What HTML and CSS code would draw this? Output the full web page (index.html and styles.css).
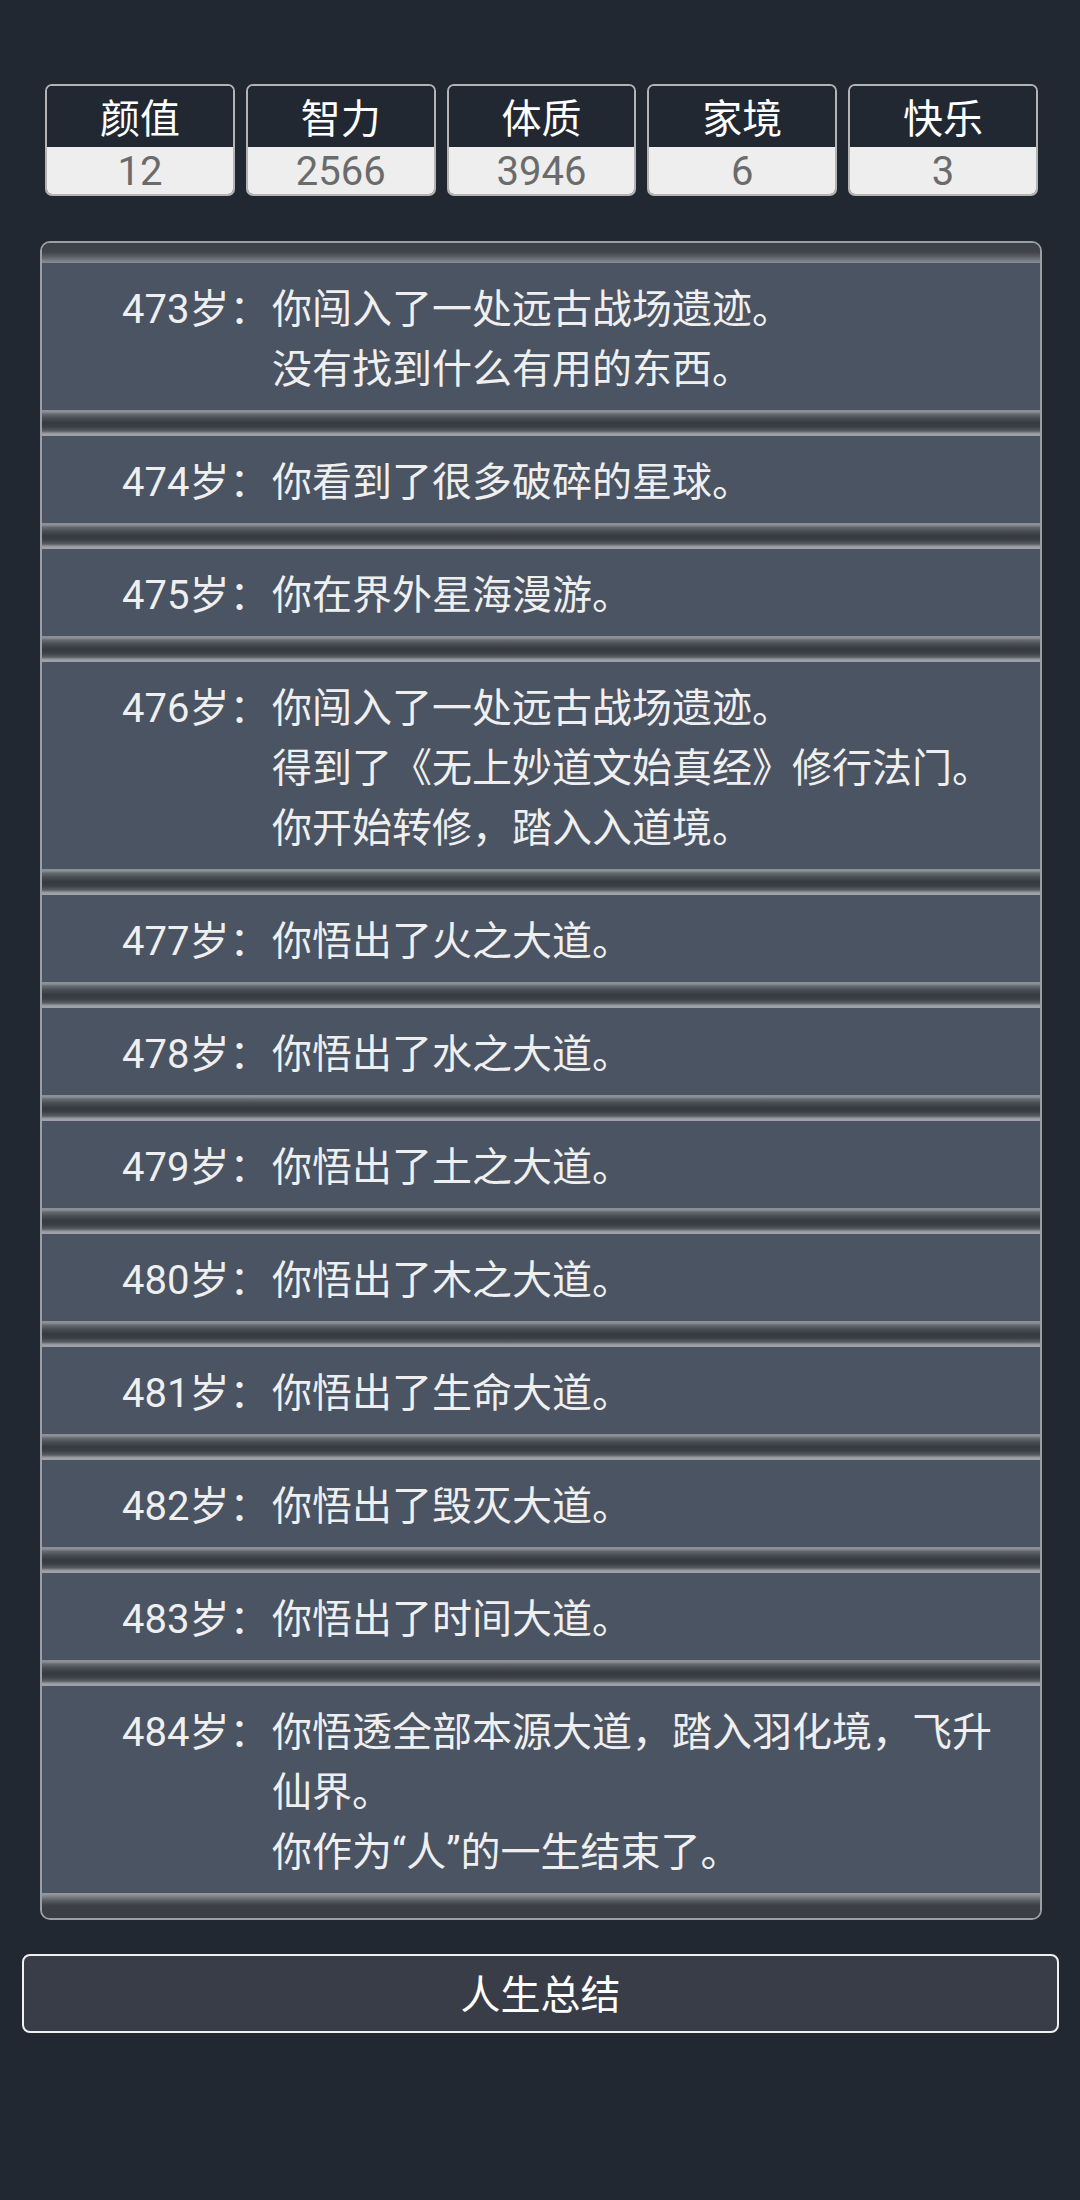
FILE: index.html
```html
<!DOCTYPE html>
<html lang="zh-CN">
<head>
<meta charset="utf-8">
<title>人生重开</title>
<link rel="stylesheet" href="styles.css">
</head>
<body>
<div class="page">
  <div class="stats">
    <div class="stat"><div class="stat-name">颜值</div><div class="stat-value">12</div></div>
    <div class="stat"><div class="stat-name">智力</div><div class="stat-value">2566</div></div>
    <div class="stat"><div class="stat-name">体质</div><div class="stat-value">3946</div></div>
    <div class="stat"><div class="stat-name">家境</div><div class="stat-value">6</div></div>
    <div class="stat"><div class="stat-name">快乐</div><div class="stat-value">3</div></div>
  </div>

  <div class="panel">
    <div class="panel-top"></div>
    <div class="item"><div class="age">473岁：</div><div class="text"><div>你闯入了一处远古战场遗迹。</div><div>没有找到什么有用的东西。</div></div></div>
    <div class="sep"></div>
    <div class="item"><div class="age">474岁：</div><div class="text"><div>你看到了很多破碎的星球。</div></div></div>
    <div class="sep"></div>
    <div class="item"><div class="age">475岁：</div><div class="text"><div>你在界外星海漫游。</div></div></div>
    <div class="sep"></div>
    <div class="item"><div class="age">476岁：</div><div class="text"><div>你闯入了一处远古战场遗迹。</div><div>得到了《无上妙道文始真经》修行法门。</div><div>你开始转修，踏入入道境。</div></div></div>
    <div class="sep"></div>
    <div class="item"><div class="age">477岁：</div><div class="text"><div>你悟出了火之大道。</div></div></div>
    <div class="sep"></div>
    <div class="item"><div class="age">478岁：</div><div class="text"><div>你悟出了水之大道。</div></div></div>
    <div class="sep"></div>
    <div class="item"><div class="age">479岁：</div><div class="text"><div>你悟出了土之大道。</div></div></div>
    <div class="sep"></div>
    <div class="item"><div class="age">480岁：</div><div class="text"><div>你悟出了木之大道。</div></div></div>
    <div class="sep"></div>
    <div class="item"><div class="age">481岁：</div><div class="text"><div>你悟出了生命大道。</div></div></div>
    <div class="sep"></div>
    <div class="item"><div class="age">482岁：</div><div class="text"><div>你悟出了毁灭大道。</div></div></div>
    <div class="sep"></div>
    <div class="item"><div class="age">483岁：</div><div class="text"><div>你悟出了时间大道。</div></div></div>
    <div class="sep"></div>
    <div class="item"><div class="age">484岁：</div><div class="text"><div>你悟透全部本源大道，踏入羽化境，飞升仙界。</div><div>你作为“人”的一生结束了。</div></div></div>
    <div class="panel-bottom"></div>
  </div>

  <div class="summary-btn">人生总结</div>
</div>
</body>
</html>
```

FILE: styles.css
```css
html, body {
  margin: 0;
  padding: 0;
  background: #222832;
}

body {
  font-family: Roboto, "Noto Sans CJK SC", sans-serif;
  -webkit-font-smoothing: antialiased;
}

.page {
  padding-top: 84px;
  min-height: 2116px;
}

.stats {
  display: flex;
  gap: 11px;
  margin: 0 42px 0 45px;
}

.stat {
  flex: 1 1 0;
  border: 2px solid #b4b4b4;
  border-radius: 7px;
  overflow: hidden;
  text-align: center;
  font-size: 40px;
}

.stat-name {
  height: 61px;
  line-height: 58px;
  padding-top: 5px;
  box-sizing: border-box;
  background: #222832;
  color: #ffffff;
}

.stat-value {
  height: 47px;
  line-height: 47px;
  padding-top: 1px;
  box-sizing: border-box;
  background: #eeeeee;
  color: #6b6b6b;
}

.panel {
  margin: 45px 38px 0 40px;
  border: 2px solid #9b9ea3;
  border-radius: 10px;
  background: #3a3d45;
  overflow: hidden;
}

.panel-top {
  height: 20px;
  background: linear-gradient(to bottom, #3d4047 0px, #404349 9px, #5c6067 14px, #7c8087 18px, #888c93 20px);
}

.sep {
  height: 26px;
  background: linear-gradient(to bottom,
    #8b8f96 0px, #8b8f96 2px,
    #666a71 4px,
    #4a4d54 8px,
    #36393f 13px,
    #3c3f46 17px,
    #585c63 21px,
    #8c9097 23px,
    #9ea2a8 24px, #9ea2a8 26px);
}

.panel-bottom {
  height: 25px;
  background: linear-gradient(to bottom, #969aa0 0px, #8c9097 2px, #5c6067 7px, #3d4048 12px, #3a3d45 100%);
}

.item {
  display: flex;
  padding: 16.5px 30px 10.5px 80px;
  background: #4b5462;
  color: #efefef;
  font-size: 40px;
  line-height: 60px;
}

.age {
  flex: none;
  width: 150px;
  white-space: nowrap;
}

.text {
  flex: 1 1 auto;
}

.summary-btn {
  margin: 34px 21px 0 22px;
  height: 79px;
  box-sizing: border-box;
  border: 2.5px solid #f0f0f0;
  border-radius: 8px;
  padding-top: 6px;
  background: #393d47;
  color: #ffffff;
  font-size: 40px;
  line-height: 68px;
  text-align: center;
}
```
